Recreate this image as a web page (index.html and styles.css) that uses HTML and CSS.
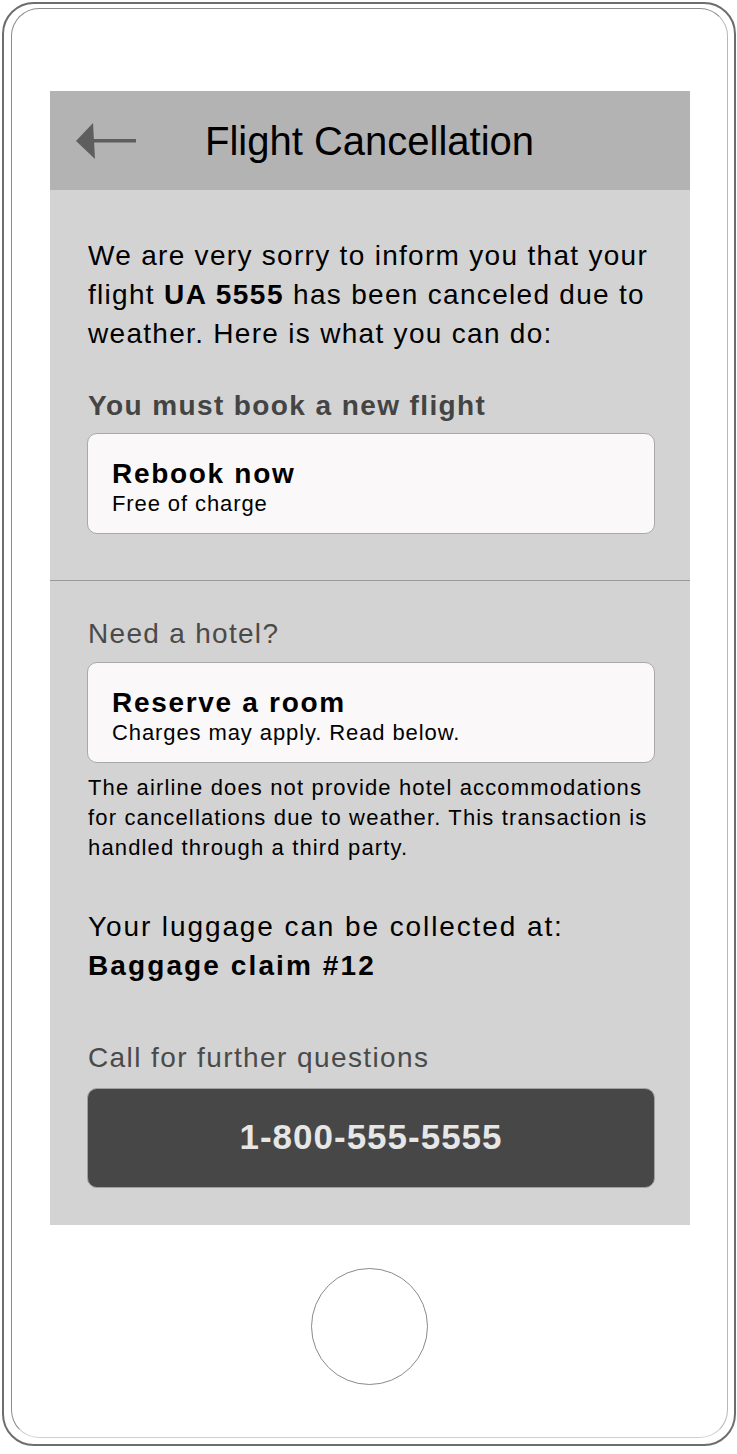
FILE: index.html
```html
<!DOCTYPE html>
<html lang="en">
<head>
<meta charset="utf-8">
<title>Flight Cancellation</title>
<link rel="stylesheet" href="styles.css">
</head>
<body>
<div class="phone">
  <div class="frame">
    <div class="screen">
      <header class="topbar">
        <svg class="back" width="60" height="40" viewBox="0 0 60 40" aria-hidden="true">
          <polygon points="0,20 17,2 19,38" fill="#5e5e5e"/>
          <rect x="16" y="18" width="44" height="3.5" fill="#5e5e5e"/>
        </svg>
        <h1 class="title">Flight Cancellation</h1>
      </header>
      <section class="section first">
        <p class="lead">We are very sorry to inform you that your<br>flight <b>UA 5555</b> has been canceled due to<br>weather. Here is what you can do:</p>
        <h2 class="heading strong">You must book a new flight</h2>
        <div class="card">
          <div class="card-title">Rebook now</div>
          <div class="card-sub">Free of charge</div>
        </div>
      </section>
      <section class="section second">
        <h2 class="heading">Need a hotel?</h2>
        <div class="card">
          <div class="card-title">Reserve a room</div>
          <div class="card-sub">Charges may apply. Read below.</div>
        </div>
        <p class="note">The airline does not provide hotel accommodations<br>for cancellations due to weather. This transaction is<br>handled through a third party.</p>
        <p class="lead luggage">Your luggage can be collected at:<br><b>Baggage claim #12</b></p>
        <h2 class="heading call">Call for further questions</h2>
        <div class="phone-btn">1-800-555-5555</div>
      </section>
    </div>
    <div class="home"></div>
  </div>
</div>
</body>
</html>
```
FILE: styles.css
```css
html, body {
  margin: 0;
  padding: 0;
  background: #ffffff;
}
body {
  font-family: "Liberation Sans", Arial, sans-serif;
  color: #000;
}
.phone {
  margin: 2px 0 0 2px;
  width: 734px;
  height: 1444px;
  box-sizing: border-box;
  border: 2px solid #6d6d6d;
  border-radius: 32px;
  padding: 4px 0 0 7px;
}
.frame {
  width: 717px;
  height: 1430px;
  box-sizing: border-box;
  border: 1px solid #8c8c8c;
  border-right-color: #b8b8b8;
  border-bottom-color: #cfcfcf;
  border-radius: 28px;
  padding: 82px 0 0 38px;
}
.screen {
  width: 640px;
  background: #d3d3d3;
}
.topbar {
  height: 99px;
  background: #b3b3b3;
  display: flex;
  align-items: center;
  padding-left: 26px;
  gap: 69px;
}
.back {
  display: block;
  flex: none;
}
.title {
  margin: 0;
  font-size: 40px;
  font-weight: normal;
  line-height: 48px;
  color: #000;
}
.section {
  padding: 0 30px 0 37px;
}
.section.first {
  padding-top: 46px;
  padding-bottom: 46px;
  border-bottom: 1px solid #999999;
}
.section.second {
  padding-top: 33px;
  padding-bottom: 37px;
}
.lead {
  margin: 0 0 0 1px;
  font-size: 28px;
  line-height: 39px;
  letter-spacing: 1.3px;
  white-space: nowrap;
}
.lead b {
  font-weight: bold;
  letter-spacing: 1.5px;
}
.heading {
  margin: 0 0 8px 1px;
  font-size: 28px;
  line-height: 39px;
  font-weight: normal;
  color: #4a4a4a;
  letter-spacing: 1.3px;
}
.heading.strong {
  margin-top: 33px;
  font-weight: bold;
  color: #444444;
  letter-spacing: 1.4px;
}
.card {
  height: 101px;
  margin-right: 5px;
  box-sizing: border-box;
  background: #faf8f9;
  border: 1px solid #a9a9a9;
  border-radius: 10px;
  padding: 24px 20px 0 24px;
}
.second .card {
  margin-top: 9px;
}
.card-title {
  font-size: 28px;
  font-weight: bold;
  line-height: 32px;
  letter-spacing: 1.7px;
}
.card-sub {
  font-size: 22px;
  line-height: 28px;
  letter-spacing: 0.9px;
}
.note {
  margin: 10px 0 0 1px;
  font-size: 22px;
  line-height: 30px;
  letter-spacing: 1.15px;
  white-space: nowrap;
}
.luggage {
  margin-top: 44px;
  letter-spacing: 1.9px;
}
.luggage b {
  letter-spacing: 2.1px;
}
.heading.call {
  margin-top: 53px;
  margin-bottom: 11px;
  letter-spacing: 1.4px;
}
.phone-btn {
  height: 100px;
  margin-right: 5px;
  box-sizing: border-box;
  background: #464746;
  border: 1px solid #a0a0a0;
  border-radius: 10px;
  display: flex;
  align-items: center;
  justify-content: center;
  color: #e6e6e6;
  font-size: 35px;
  font-weight: bold;
  letter-spacing: 1px;
  padding-bottom: 2px;
}
.home {
  width: 117px;
  height: 117px;
  box-sizing: border-box;
  border: 1px solid #8a8a8a;
  border-radius: 50%;
  margin: 43px 0 0 261px;
}
```
